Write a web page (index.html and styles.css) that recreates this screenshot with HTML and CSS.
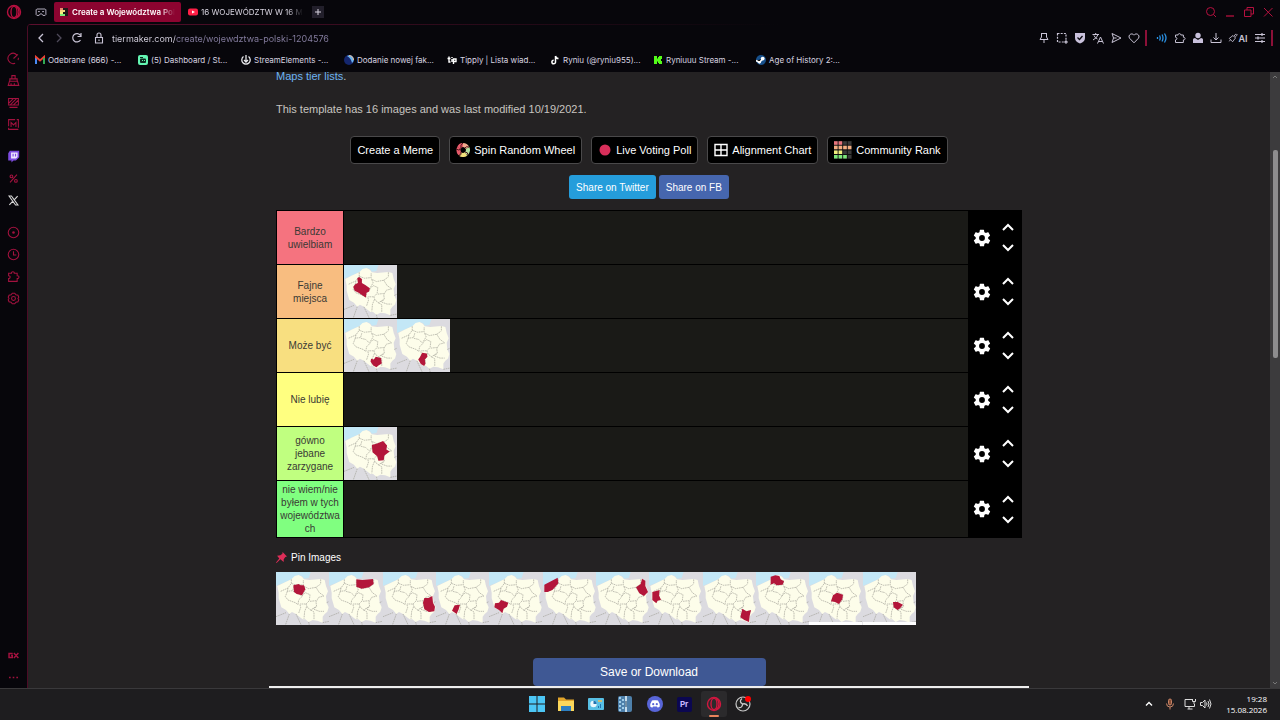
FILE: index.html
```html
<!DOCTYPE html>
<html lang="pl">
<head>
    <meta charset="UTF-8">
    <meta name="viewport" content="width=device-width, initial-scale=1.0">
    <title>Create a Województwa Polski Tier List</title>
    <link rel="stylesheet" href="styles.css">
</head>
<body>
    <!-- shared shapes -->
    <svg class="defs" aria-hidden="true">
        <symbol id="poland" viewBox="0 0 160 160">
            <rect width="160" height="160" fill="#dcdbe0"/>
            <path fill="#c3e7f6" d="M0 0H104L98 18 84 20 78 12 68 10 46 22 24 32 4 40 0 42Z"/>
            <path fill="#fdfdea" d="M4 42 24 32 46 22 56 12 68 9 78 14 84 22 100 24 134 21 146 24 150 42 156 58 150 72 152 92 158 106 154 119 146 126 140 134 140 152 124 146 110 144 98 150 88 142 80 142 70 134 60 126 48 120 40 126 30 114 16 106 12 92 8 78 8 62Z"/>
            <path class="borders" d="M46 22 46 34 36 48 14 58M46 34 62 40 82 38 82 24M36 48 34 58 50 56 54 42M34 58 28 74 36 84 58 92 66 98 68 84 78 74 66 62 50 58M82 42 98 50 120 46 134 36M84 44 88 54 78 70M120 46 130 62 144 72 128 76 120 90 122 104 112 110M78 72 88 62 102 68 100 86 90 96 72 96M102 88 120 86M90 96 94 106 104 114 120 104M72 98 74 106 68 124M92 104 86 118 84 140M104 114 114 120 114 142M114 112 130 118 144 118M134 22 134 36M0 134 30 122M40 126 28 160M60 126 76 160M98 150 100 160M140 152 160 148M152 92 160 88"/>
        </symbol>
        <symbol id="gear" viewBox="0 0 24 24">
            <path fill="#fff" d="M19.4 13a7.500 7.500 0 0 0 0-2l2.100-1.600c.2-.2.3-.5.1-.7l-2-3.500c-.1-.2-.4-.3-.6-.2l-2.500 1a7.300 7.300 0 0 0-1.700-1L14.400 2.400a.5.5 0 0 0-.5-.4h-4a.5.5 0 0 0-.5.4L9 5a7.700 7.700 0 0 0-1.700 1L4.900 5c-.2-.1-.5 0-.6.2l-2 3.500c-.1.200-.1.500.1.700L4.500 11a8 8 0 0 0 0 2l-2.100 1.600c-.2.2-.3.500-.1.700l2 3.500c.1.200.4.300.6.200l2.500-1c.5.400 1.100.7 1.700 1l.4 2.600c0 .2.2.4.5.4h4c.2 0 .5-.2.5-.4l.4-2.600c.6-.3 1.200-.6 1.700-1l2.500 1c.2.1.5 0 .6-.2l2-3.500c.1-.2.1-.5-.1-.7zM12 15.500a3.500 3.500 0 1 1 0-7 3.500 3.500 0 0 1 0 7z"/>
        </symbol>
        <symbol id="up" viewBox="0 0 14 10"><path fill="none" stroke="#fff" stroke-width="2" d="M2 8 7 3 12 8"/></symbol>
        <symbol id="down" viewBox="0 0 14 10"><path fill="none" stroke="#fff" stroke-width="2" d="M2 2 7 7 12 2"/></symbol>
        <symbol id="opera" viewBox="0 0 16 16">
            <g fill="none" stroke="currentColor" stroke-width="1.400"><circle cx="8" cy="8" r="6.500"/><ellipse cx="8" cy="8" rx="3" ry="5.600"/><path d="M10 2.500c4 2 4 9 0 11"/></g>
        </symbol>
        <symbol id="puzzle" viewBox="0 0 16 16">
            <path fill="none" stroke="currentColor" stroke-width="1.300" d="M2 4H5.500C5 1.500 9.500 1.500 9 4H12.500V7C15.500 6.500 15.500 11 12.500 10.500V14H2V10.500C4.500 10.500 4.500 7 2 7Z"/>
        </symbol>
    </svg>

    <header class="tabs">
        <button class="opera-menu" aria-label="Menu"><svg viewBox="0 0 16 16"><use href="#opera"/></svg></button>
        <button class="workspace" aria-label="Workspace"><svg viewBox="0 0 16 16"><path fill="none" stroke="currentColor" stroke-width="1.300" d="M2.500 4H13.500L14.500 5V11.500L13.500 12.500H10.500L9 10.500H7L5.500 12.500H2.500L1.500 11.500V5ZM4 7.500H6.500M9.500 7.500H12"/></svg></button>
        <button class="tab tab-active">
            <svg viewBox="0 0 8 8"><rect width="8" height="8" fill="#1d1a17"/><path fill="#f08a70" d="M0 0H3V2H0Z"/><path fill="#f7d77e" d="M0 2H5V4H0Z"/><path fill="#f4f47b" d="M0 4H3V6H0Z"/><path fill="#7eea7b" d="M0 6H5V8H0Z"/></svg>
            <span>Create a Województwa Pol</span>
        </button>
        <button class="tab">
            <svg viewBox="0 0 10 8"><rect y=".5" width="10" height="7" rx="2" fill="#ff1f46"/><path fill="#fff" d="M4 2.500 7 4 4 5.500Z"/></svg>
            <span>16 WOJEWÓDZTW W 16 M</span>
        </button>
        <button class="new-tab" aria-label="New tab"><svg viewBox="0 0 12 12"><path stroke="currentColor" d="M6 3V9M3 6H9"/></svg></button>
        <div class="window-buttons">
            <button aria-label="Search tabs"><svg viewBox="0 0 12 12"><g fill="none" stroke="currentColor"><circle cx="5.500" cy="5.500" r="4"/><path d="M8.500 8.500 11 11"/></g></svg></button>
            <button aria-label="Minimize"><svg viewBox="0 0 12 12"><path stroke="currentColor" stroke-width="1.300" d="M2 10H10"/></svg></button>
            <button aria-label="Restore"><svg viewBox="0 0 12 12"><path fill="none" stroke="currentColor" d="M1.500 4H8V10.500H1.500ZM4 4V1.500H10.500V8H8"/></svg></button>
            <button aria-label="Close"><svg viewBox="0 0 12 12"><path stroke="currentColor" d="M2 2 10.500 10.500M10.500 2 2 10.500"/></svg></button>
        </div>
    </header>

    <div class="window">
        <aside class="sidebar">
            <div class="group">
                <button aria-label="Speed dial"><svg viewBox="0 0 16 16"><g fill="none" stroke="currentColor" stroke-width="1.300"><path d="M12 3.500A6.300 6.300 0 1 0 10 13.800M14 7A6 6 0 0 1 13.500 10M8 8 13.500 3"/></g></svg></button>
                <button aria-label="Cleaner"><svg viewBox="0 0 16 16"><path fill="none" stroke="currentColor" stroke-width="1.300" d="M6 6V2H10V6M3.500 9V6H12.500V9M3 9H13L14.500 14H1.500ZM5 14V11.500M9 14V11.500"/></svg></button>
                <button aria-label="Mods"><svg viewBox="0 0 16 16"><path fill="none" stroke="currentColor" stroke-width="1.300" d="M2 3H14V11H2ZM3 14H13M2 9 8 3M4 11 12 3M8 11 14 5"/></svg></button>
                <button aria-label="Player"><svg viewBox="0 0 16 16"><path fill="none" stroke="currentColor" stroke-width="1.300" d="M2 10V2H10M12 2H14V12M14 14H2V12M5 11V5.500L8 8.500 11 5.500V11"/></svg></button>
            </div>
            <div class="group">
                <button aria-label="Twitch"><svg viewBox="0 0 16 16"><path fill="#7d4be0" d="M3.500 1H15V9L11 13H8L5.500 15.500V13H1.500V4Z"/><path fill="#eee7ff" d="M5 3H13V8.500L11 10.500H5Z"/><path stroke="#7d4be0" stroke-width="1.400" d="M7.500 4.500V8M10.500 4.500V8"/></svg></button>
                <button aria-label="Deals"><svg class="small" viewBox="0 0 16 16"><g fill="none" stroke="currentColor" stroke-width="1.600"><circle cx="5" cy="5" r="2"/><circle cx="11.500" cy="11.500" r="2"/><path d="M13 2.500 3 13.500"/></g></svg></button>
                <button aria-label="X"><svg class="small" viewBox="0 0 16 16"><path fill="none" stroke="#d8d8d8" stroke-width="1.600" d="M1.500 1.500H5L14.500 14.500H11ZM14 1.500 9 7M7 9 2 14.500"/></svg></button>
            </div>
            <div class="group">
                <button aria-label="Play"><svg viewBox="0 0 16 16"><circle cx="8" cy="8" r="6.500" fill="none" stroke="currentColor" stroke-width="1.300"/><circle cx="8" cy="8" r="1.600" fill="currentColor"/></svg></button>
                <button aria-label="History"><svg viewBox="0 0 16 16"><g fill="none" stroke="currentColor" stroke-width="1.300"><circle cx="8" cy="8" r="6.500"/><path d="M8 4V8.500H11.500"/></g></svg></button>
                <button aria-label="Extensions"><svg viewBox="0 0 16 16"><use href="#puzzle"/></svg></button>
                <button aria-label="Settings"><svg viewBox="0 0 16 16"><g fill="none" stroke="currentColor" stroke-width="1.300"><path d="M6.500 1.500H9.500L11 3.500 13.500 4 14.500 6.500 13.500 8 14.500 9.500 13.500 12 11 12.500 9.500 14.500H6.500L5 12.500 2.500 12 1.500 9.500 2.500 8 1.500 6.500 2.500 4 5 3.500Z"/><circle cx="8" cy="8" r="2.400"/></g></svg></button>
            </div>
            <div class="group group-bottom">
                <button aria-label="GX corner"><svg viewBox="0 0 16 16"><path fill="none" stroke="currentColor" stroke-width="1.800" d="M7 5.500H2.500V10.500H6.500V8H5M8.500 5 14 11M14 5 8.500 11"/></svg></button>
                <button aria-label="More"><svg viewBox="0 0 16 16"><path stroke="currentColor" stroke-width="1.600" stroke-dasharray="2 2.500" d="M2.500 8H14"/></svg></button>
            </div>
        </aside>

        <div class="browser">
            <div class="toolbar">
                <button aria-label="Back"><svg viewBox="0 0 12 12"><path fill="none" stroke="currentColor" stroke-width="1.300" d="M8 2 4 6 8 10"/></svg></button>
                <button class="dim" aria-label="Forward"><svg viewBox="0 0 12 12"><path fill="none" stroke="currentColor" stroke-width="1.300" d="M4 2 8 6 4 10"/></svg></button>
                <button aria-label="Reload"><svg viewBox="0 0 12 12"><path fill="none" stroke="currentColor" stroke-width="1.200" d="M9.500 8A4.200 4.200 0 1 1 9.500 3.500M10 1V4.500H6.500"/></svg></button>
                <button class="lock" aria-label="Site information"><svg viewBox="0 0 12 12"><path fill="none" stroke="currentColor" stroke-width="1.100" d="M2.500 5.500H9.500V11H2.500ZM4 5.500V3Q4 1 6 1T8 3V5.500M6 7.500V9"/></svg></button>
                <input class="address" type="text" aria-label="Address" value="tiermaker.com/create/wojewdztwa-polski-1204576">
                <div class="actions">
                    <button aria-label="Pin"><svg viewBox="0 0 12 12"><path fill="none" stroke="currentColor" d="M3 1.500H9M3.500 1.500V5L2 7.500H10L8.500 5V1.500M6 7.500V11"/></svg></button>
                    <button aria-label="Snapshot"><svg viewBox="0 0 12 12"><path fill="none" stroke="currentColor" stroke-width="1.200" stroke-dasharray="2 1.200" d="M1.500 1.500H10V10H1.500Z"/><path stroke="currentColor" d="M10 8V12M8 10H12"/></svg></button>
                    <button aria-label="VPN"><svg viewBox="0 0 12 12"><path fill="#c9c1dc" d="M1 1H11V6Q11 9.500 6 11.500Q1 9.500 1 6Z"/><path fill="none" stroke="#0a0910" stroke-width="1.300" d="M3.500 5.500 5.500 7.500 8.500 4"/></svg></button>
                    <button aria-label="Translate"><svg viewBox="0 0 12 12"><path fill="none" stroke="currentColor" d="M.5 2.500H7M3.700 1V2.500M6 2.500Q5 6 1 8M2 3.500Q3 6 5.500 7M5.500 11.500 8.500 5 11.500 11.500M6.500 9.500H10.500"/></svg></button>
                    <button aria-label="Flow"><svg viewBox="0 0 12 12"><path fill="none" stroke="currentColor" d="M2 1.500 11 6 2 10.500 3.500 6ZM3.500 6H6.500"/></svg></button>
                    <button aria-label="Favourite"><svg viewBox="0 0 12 12"><path fill="none" stroke="currentColor" d="M6 10.800 1.500 6.200C-.5 3 4 .2 6 3.200C8 .2 12.500 3 10.500 6.200Z"/></svg></button>
                    <span class="mark"></span>
                    <button class="blue" aria-label="Sound"><svg viewBox="0 0 12 12"><path fill="none" stroke="currentColor" stroke-width="1.300" d="M1.500 5V7M3.500 3.500Q5 6 3.500 8.500M6 2.500Q8 6 6 9.500M8.500 1.500Q11.500 6 8.500 10.500"/></svg></button>
                    <button aria-label="Extensions"><svg viewBox="0 0 16 16"><use href="#puzzle"/></svg></button>
                    <button aria-label="Profile"><svg viewBox="0 0 12 12"><circle cx="6" cy="3.500" r="2.700" fill="#c9c1dc"/><path fill="#c9c1dc" d="M1 11V7.500Q1 6 3 6L6 8 9 6Q11 6 11 7.500V11Z"/></svg></button>
                    <button aria-label="Downloads"><svg viewBox="0 0 12 12"><path fill="none" stroke="currentColor" d="M6 1V8M3.500 5.500 6 8 8.500 5.500M1 7.500V10.500H11V7.500"/></svg></button>
                    <button class="ai"><svg viewBox="0 0 12 12"><path fill="none" stroke="currentColor" d="M1.500 6.500 6 3 9 6 5.500 10.500ZM7 4 9 1.500 10.500 3 8.500 5M10 1 11.500 2.500M3 8 1.500 10"/></svg>AI</button>
                    <button aria-label="Easy setup"><svg viewBox="0 0 12 12"><path stroke="currentColor" stroke-width="1.200" d="M1 2.500H11M1 6H11M1 9.500H11M8 1V4M4 4.500V7.500M8 8V11"/></svg></button>
                    <span class="mark"></span>
                </div>
            </div>
            <nav class="bookmarks">
                <a href="#"><svg viewBox="0 0 10 10"><path fill="none" stroke="#4a8af4" stroke-width="2" d="M1 9V3"/><path fill="none" stroke="#ea4335" stroke-width="2" d="M1 3V2L5 5.500 9 2V3"/><path stroke="#34a853" stroke-width="2" d="M9 9V3"/></svg>Odebrane (666) -...</a>
                <a href="#"><svg viewBox="0 0 10 10"><rect width="10" height="10" rx="2" fill="#63f5b2"/><rect x="2" y="3.500" width="6" height="4.500" rx="1" fill="#0c2a20"/><path stroke="#0c2a20" d="M2 2.500H5"/><path stroke="#63f5b2" d="M4.500 5V6M6.500 5V6"/></svg>(5) Dashboard / St...</a>
                <a href="#"><svg viewBox="0 0 10 10"><g fill="none" stroke="#e8e8ec" stroke-width="1.300"><path d="M2.500 1.500A4.200 4.200 0 1 0 7.500 1.500M5 0V7M3 5 5 7 7 5"/></g></svg>StreamElements -...</a>
                <a href="#"><svg viewBox="0 0 10 10"><circle cx="5" cy="5" r="5" fill="#14266e"/><path fill="#6ab4ef" d="M3 1A4 4 0 0 1 8 8Q7 3 3 1Z"/><path fill="none" stroke="#f0b98c" d="M5 .5A4.500 4.500 0 0 1 9.500 5"/></svg>Dodanie nowej fak...</a>
                <a href="#"><svg viewBox="0 0 10 10"><path fill="none" stroke="#fff" stroke-width="1.400" d="M2 1.500V7H3.500M.5 3.500H3.500M5 4V7M6.500 9V4H9V6.500H6.500M5 2V3"/></svg>Tipply | Lista wiad...</a>
                <a href="#"><svg viewBox="0 0 10 10"><path fill="none" stroke="#fff" stroke-width="1.500" d="M5.500 1V7A1.800 1.800 0 1 1 3.700 5.200M5.500 1Q6 3.500 8.500 3.500"/></svg>Ryniu (@ryniu955)...</a>
                <a href="#"><svg viewBox="0 0 10 10"><path fill="#53fc18" d="M1 1H4V3.500H5V2H6V1H9V4H8V6H9V9H6V8H5V6.500H4V9H1Z"/></svg>Ryniuuu Stream -...</a>
                <a href="#"><svg viewBox="0 0 10 10"><circle cx="5" cy="5" r="5" fill="#17508c"/><path stroke="#fff" stroke-width="1.700" d="M0 5.500 3.500 7.500 6.500 4"/><circle cx="6.700" cy="3.600" r="1.900" fill="#fff"/><circle cx="3.500" cy="7.200" r="1.300" fill="#fff"/></svg>Age of History 2:...</a>
            </nav>

            <div class="viewport">
                <main class="page">
                    <p class="intro"><a href="#">Maps tier lists</a>.</p>
                    <p class="intro">This template has 16 images and was last modified 10/19/2021.</p>

                    <div class="tools">
                        <button>Create a Meme</button>
                        <button><svg viewBox="0 0 14 14"><g fill="none" stroke-width="4"><path stroke="#e75a6a" d="M3 5Q4 2 7 2"/><path stroke="#f2a98c" d="M7 2Q10 2 11.500 5"/><path stroke="#b6e3a0" d="M11.500 5Q13 8 10 11"/><path stroke="#f4e27c" d="M10 11Q7 13 4 11"/><path stroke="#e75a6a" d="M4 11Q1.500 8 3 5"/></g><path fill="none" stroke="#4a1018" d="M7 0Q4 2 5 5M13 4Q10 3 9 5M12 12Q12 9 9 9M3 13Q6 12 5 9M0 6Q3 8 5 6"/></svg>Spin Random Wheel</button>
                        <button><svg viewBox="0 0 14 14"><circle cx="7" cy="7" r="5.500" fill="#d92f5a"/></svg>Live Voting Poll</button>
                        <button><svg viewBox="0 0 14 14"><path fill="none" stroke="#fff" stroke-width="1.400" d="M1 1.500H13V12.500H1ZM7 1.500V12.500M1 7H13"/></svg>Alignment Chart</button>
                        <button><svg class="rank" viewBox="0 0 18 18"><rect width="18" height="18" fill="#101010"/><g stroke-width="3.500" stroke-dasharray="3.600 1"><path stroke="#3a3a3a" d="M0 2H18M0 6.600H18M0 11.200H18M0 15.800H18"/><path stroke="#e8737c" d="M0 2H9"/><path stroke="#f3ac80" d="M0 6.600H18"/><path stroke="#f0ef7d" d="M0 11.200H9"/><path stroke="#7de87a" d="M0 15.800H13.500"/></g></svg>Community Rank</button>
                    </div>
                    <div class="share">
                        <button class="twitter">Share on Twitter</button>
                        <button class="facebook">Share on FB</button>
                    </div>

                    <div class="tiers">
                        <div class="tier">
                            <div class="label red">Bardzo uwielbiam</div>
                            <div class="items"></div>
                            <div class="controls">
                                <button aria-label="Settings"><svg class="gear"><use href="#gear"/></svg></button>
                                <div class="arrows"><button aria-label="Up"><svg><use href="#up"/></svg></button><button aria-label="Down"><svg><use href="#down"/></svg></button></div>
                            </div>
                        </div>
                        <div class="tier">
                            <div class="label orange">Fajne miejsca</div>
                            <div class="items">
                                <svg class="map" viewBox="0 0 160 160"><use href="#poland"/><path d="M40 40 46 36 54 42 54 54 64 60 78 70 76 80 68 84 66 98 56 92 44 84 32 78 28 66 34 58 42 54Z"/></svg>
                            </div>
                            <div class="controls">
                                <button aria-label="Settings"><svg class="gear"><use href="#gear"/></svg></button>
                                <div class="arrows"><button aria-label="Up"><svg><use href="#up"/></svg></button><button aria-label="Down"><svg><use href="#down"/></svg></button></div>
                            </div>
                        </div>
                        <div class="tier">
                            <div class="label amber">Może być</div>
                            <div class="items">
                                <svg class="map" viewBox="0 0 160 160"><use href="#poland"/><path d="M82 120 90 122 96 114 112 118 114 134 104 140 98 146 88 140 80 128Z"/></svg>
                                <svg class="map" viewBox="0 0 160 160"><use href="#poland"/><path d="M76 102 90 104 92 114 84 122 86 134 82 142 72 136 64 122 70 114Z"/></svg>
                            </div>
                            <div class="controls">
                                <button aria-label="Settings"><svg class="gear"><use href="#gear"/></svg></button>
                                <div class="arrows"><button aria-label="Up"><svg><use href="#up"/></svg></button><button aria-label="Down"><svg><use href="#down"/></svg></button></div>
                            </div>
                        </div>
                        <div class="tier">
                            <div class="label yellow">Nie lubię</div>
                            <div class="items"></div>
                            <div class="controls">
                                <button aria-label="Settings"><svg class="gear"><use href="#gear"/></svg></button>
                                <div class="arrows"><button aria-label="Up"><svg><use href="#up"/></svg></button><button aria-label="Down"><svg><use href="#down"/></svg></button></div>
                            </div>
                        </div>
                        <div class="tier">
                            <div class="label lime">gówno jebane zarzygane</div>
                            <div class="items">
                                <svg class="map" viewBox="0 0 160 160"><use href="#poland"/><path d="M84 54 100 50 118 42 130 56 128 68 138 74 122 86 120 100 104 102 100 88 86 76Z"/></svg>
                            </div>
                            <div class="controls">
                                <button aria-label="Settings"><svg class="gear"><use href="#gear"/></svg></button>
                                <div class="arrows"><button aria-label="Up"><svg><use href="#up"/></svg></button><button aria-label="Down"><svg><use href="#down"/></svg></button></div>
                            </div>
                        </div>
                        <div class="tier">
                            <div class="label green">nie wiem/nie byłem w tych województwach</div>
                            <div class="items"></div>
                            <div class="controls">
                                <button aria-label="Settings"><svg class="gear"><use href="#gear"/></svg></button>
                                <div class="arrows"><button aria-label="Up"><svg><use href="#up"/></svg></button><button aria-label="Down"><svg><use href="#down"/></svg></button></div>
                            </div>
                        </div>
                    </div>

                    <button class="pin"><svg viewBox="0 0 10 10"><path fill="#dd2e58" d="M6 0 10 4 8.500 4.500 7 6.500V9L4 6.500 .5 10 0 9.500 3 6 1 3.500 4 3 5.800 1.500Z"/></svg>Pin Images</button>

                    <div class="pool">
                        <svg class="map" viewBox="0 0 160 160"><use href="#poland"/><path d="M52 40 68 36 74 40 84 40 88 52 78 70 62 66 54 60Z"/></svg>
                        <svg class="map" viewBox="0 0 160 160"><use href="#poland"/><path d="M82 22 100 24 132 21 134 36 120 46 98 50 82 44Z"/></svg>
                        <svg class="map" viewBox="0 0 160 160"><use href="#poland"/><path d="M124 78 136 78 148 72 150 92 156 104 154 118 138 120 124 112 120 92Z"/></svg>
                        <svg class="map" viewBox="0 0 160 160"><use href="#poland"/><path d="M56 100 72 98 68 112 62 126 48 116Z"/></svg>
                        <svg class="map" viewBox="0 0 160 160"><use href="#poland"/><path d="M18 94 30 92 36 84 58 92 54 104 44 110 40 124 30 114 16 106Z"/></svg>
                        <svg class="map" viewBox="0 0 160 160"><use href="#poland"/><path d="M4 38 24 28 44 17 46 34 36 46 28 54 14 60 4 60Z"/></svg>
                        <svg class="map" viewBox="0 0 160 160"><use href="#poland"/><path d="M138 20 148 26 148 42 156 60 144 72 130 64 120 46 134 36Z"/></svg>
                        <svg class="map" viewBox="0 0 160 160"><use href="#poland"/><path d="M10 60 32 54 30 70 36 84 26 86 22 94 10 84Z"/></svg>
                        <svg class="map" viewBox="0 0 160 160"><use href="#poland"/><path d="M118 110 130 118 144 114 140 132 138 150 124 144 112 136Z"/></svg>
                        <svg class="map" viewBox="0 0 160 160"><use href="#poland"/><path d="M44 14 58 10 70 12 74 22 84 28 80 38 62 40 54 34 44 38Z"/></svg>
                        <svg class="map" viewBox="0 0 160 160"><use href="#poland"/><path d="M72 70 84 62 102 68 100 82 90 96 78 90 66 88Z"/><rect y="150" width="160" height="10"/></svg>
                        <svg class="map" viewBox="0 0 160 160"><use href="#poland"/><path d="M90 90 104 90 120 98 112 108 104 114 92 106Z"/><rect y="150" width="160" height="10"/></svg>
                    </div>

                    <button class="save">Save or Download</button>
                    <div class="preview"></div>
                </main>
                <div class="scrollbar">
                    <svg viewBox="0 0 10 10"><path fill="none" stroke="#777" d="M3 6 5 4 7 6"/></svg>
                    <div class="thumb"></div>
                    <svg viewBox="0 0 10 10"><path fill="none" stroke="#777" d="M3 4 5 6 7 4"/></svg>
                </div>
            </div>
        </div>
    </div>

    <footer class="taskbar">
        <div class="apps">
            <button aria-label="Start"><svg viewBox="0 0 16 16"><path fill="#4cc6f5" d="M0 0H7.500V7.500H0ZM8.500 0H16V7.500H8.500ZM0 8.500H7.500V16H0ZM8.500 8.500H16V16H8.500Z"/></svg></button>
            <button aria-label="Explorer"><svg viewBox="0 0 16 16"><path fill="#e2a52b" d="M0 1.500H6L8 3.500H16V8H0Z"/><path fill="#fbd75b" d="M0 5H16V15H0Z"/><path fill="#2d7fc1" d="M3 10H13V15H3Z"/></svg></button>
            <button aria-label="Control panel"><svg viewBox="0 0 16 16"><rect y="2" width="16" height="12" rx="1" fill="#58bfe4"/><circle cx="5.500" cy="8" r="3.200" fill="#e8f6fc"/><path fill="#2273b0" d="M5.500 8V4.800A3.200 3.200 0 0 1 8.700 8ZM10 10H11V12H10ZM12 8H13V12H12Z"/><path stroke="#f4bd4d" stroke-width="1.500" d="M10 5H14"/></svg></button>
            <button aria-label="Archive"><svg viewBox="0 0 16 16"><rect x="1" width="14" height="16" rx="2" fill="#4e80ab"/><path stroke="#9fcce8" stroke-width="2" stroke-dasharray="2 2" d="M3 1V15M6 3V15"/><path stroke="#c5dced" stroke-width="2" d="M9 0V16"/><path stroke="#213e59" d="M9 5V11"/></svg></button>
            <button aria-label="Discord"><svg viewBox="0 0 16 16"><circle cx="8" cy="8" r="8" fill="#5865d8"/><path fill="#fff" d="M5 4.500 7 4.200H9L11 4.500Q13 7.500 12.800 10.500L10.800 11.800 10 10.600H6L5.200 11.800 3.200 10.500Q3 7.500 5 4.500Z"/><circle cx="6.200" cy="8.200" r="1.100" fill="#5865d8"/><circle cx="9.800" cy="8.200" r="1.100" fill="#5865d8"/></svg></button>
            <button class="premiere"><span>Pr</span></button>
            <button class="running" aria-label="Opera GX"><svg viewBox="0 0 16 16"><use href="#opera"/></svg></button>
            <button class="obs" aria-label="OBS"><svg viewBox="0 0 16 16"><circle cx="8" cy="8" r="7" fill="#202020" stroke="#c9c9c9" stroke-width="1.200"/><path fill="none" stroke="#c9c9c9" stroke-width="1.300" d="M7 2.500Q3.500 5.500 7.500 8Q11.500 7 12.500 10M7.500 8Q7.500 12 3.500 11.500"/><circle cx="13" cy="3" r="3" fill="#f00"/></svg></button>
        </div>
        <div class="tray">
            <button aria-label="Hidden icons"><svg viewBox="0 0 12 12"><path fill="none" stroke="#fff" stroke-width="1.400" d="M3 7.500 6 4.500 9 7.500"/></svg></button>
            <button aria-label="Microphone"><svg viewBox="0 0 12 12"><g fill="none" stroke="#c98567"><rect x="4.500" y="1" width="3" height="6" rx="1.500" fill="#8a4f36"/><path d="M2.500 5.500Q2.500 9 6 9T9.500 5.500M6 9V11.500"/></g></svg></button>
            <button class="system" aria-label="Network and volume">
                <svg viewBox="0 0 12 12"><path fill="none" stroke="#ddd" d="M8 1.500H1V8.500H10.500V6M3.500 11H8.500M5 8.500V11M8.500 1V3.500H11.500V1M10 3.500V6"/></svg>
                <svg viewBox="0 0 12 12"><path fill="none" stroke="#ddd" d="M.5 4.500H2.500L5 2V10L2.500 7.500H.5ZM6.500 4.500Q7.500 6 6.500 7.500M8 3Q10 6 8 9M9.500 1.500Q12.500 6 9.500 10.500"/></svg>
            </button>
            <div class="clock"><time>19:28</time><time>15.08.2026</time></div>
        </div>
    </footer>
</body>
</html>
```
FILE: styles.css
```css
* {
    box-sizing: border-box;
}

body {
    margin: 0;
    height: 100vh;
    display: flex;
    flex-direction: column;
    overflow: hidden;
    background-color: #07060b;
    color: #d8d4e0;
    font-family: Inter, sans-serif;
    font-size: 9px;
}

button {
    display: flex;
    align-items: center;
    justify-content: center;
    margin: 0;
    padding: 0;
    border: 0;
    background: none;
    color: inherit;
    font: inherit;
    white-space: nowrap;
}

a {
    color: inherit;
    text-decoration: none;
}

svg {
    display: block;
    flex-shrink: 0;
}

.defs {
    position: absolute;
    width: 0;
    height: 0;
}

/* tab strip */
.tabs {
    display: flex;
    align-items: center;
    height: 24px;
    flex-shrink: 0;
    padding-right: 3px;
}

.opera-menu {
    width: 28px;
    color: #b5103f;
}

.opera-menu svg {
    width: 16px;
    height: 16px;
}

.workspace {
    width: 26px;
    color: #b8b2c4;
}

.workspace svg {
    width: 12px;
    height: 12px;
}

.tab {
    width: 127px;
    height: 20px;
    padding: 0 0 0 5px;
    gap: 3px;
    border-radius: 2px;
    justify-content: flex-start;
    font-size: 8px;
}

.tab svg {
    width: 10px;
    height: 8px;
}

.tab span {
    -webkit-mask-image: linear-gradient(to right, #000 85%, transparent);
    mask-image: linear-gradient(to right, #000 85%, transparent);
}

.tab-active {
    background-color: #8c0430;
    color: #fff;
    font-weight: 600;
}

.tab + .tab {
    padding-left: 7px;
}

.new-tab {
    width: 12px;
    height: 12px;
    margin-left: 4px;
    background-color: #221f2b;
}

.new-tab svg {
    width: 12px;
}

.window-buttons {
    display: flex;
    margin-left: auto;
    color: #b5103f;
}

.window-buttons button {
    width: 19px;
}

.window-buttons svg {
    width: 12px;
    height: 12px;
}

/* sidebar */
.window {
    display: flex;
    flex: 1;
    min-height: 0;
}

.sidebar {
    display: flex;
    flex-direction: column;
    gap: 10px;
    width: 27px;
    padding-top: 23px;
    color: #a3123f;
}

.group button {
    width: 27px;
    height: 22px;
}

.group svg {
    width: 13px;
    height: 13px;
}

.group .small {
    width: 11px;
    height: 11px;
}

.group-bottom {
    margin-top: auto;
}

/* browser frame */
.browser {
    display: flex;
    flex-direction: column;
    flex: 1;
    min-width: 0;
    border-left: 1px solid #4c0c26;
    border-top-left-radius: 4px;
    background: linear-gradient(to right, #5c0f2e, transparent 60%) top / 100% 1px no-repeat;
}

.toolbar {
    display: flex;
    align-items: center;
    height: 28px;
    padding: 0 5px 0 4px;
    color: #c9c4d6;
}

.toolbar button {
    width: 18px;
    height: 18px;
}

.toolbar svg {
    width: 12px;
    height: 12px;
}

.toolbar .dim {
    color: #4f4a5a;
}

.toolbar .lock {
    width: 26px;
}

.address {
    flex: 1;
    min-width: 0;
    padding: 0;
    border: 0;
    outline: 0;
    color: transparent;
    background: linear-gradient(to right, #dcd8e6 63px, #8880a3 63px);
    -webkit-background-clip: text;
    background-clip: text;
    font: inherit;
}

.actions {
    display: flex;
    align-items: center;
}

.mark {
    width: 2px;
    height: 16px;
    margin: 0 2px;
    background-color: #8c1038;
}

.actions .mark + button {
    margin-left: 4px;
}

.actions .blue {
    color: #2b93e6;
}

.actions .ai {
    width: 26px;
    font-weight: 600;
}

.actions .ai svg {
    width: 10px;
}

.bookmarks {
    display: flex;
    height: 20px;
    padding-left: 7px;
    font-size: 8px;
}

.bookmarks a {
    display: flex;
    align-items: center;
    gap: 3px;
    width: 103px;
    padding-bottom: 4px;
    white-space: nowrap;
}

.bookmarks svg {
    width: 10px;
    height: 10px;
}

/* tier list page */
.viewport {
    display: flex;
    flex: 1;
    min-height: 0;
    overflow: hidden;
    background-color: #242223;
    font-family: "Liberation Sans", Arial, sans-serif;
    font-size: 10px;
}

.page {
    display: flex;
    flex-direction: column;
    width: 760px;
    margin: -3px auto 0;
    padding: 0 7px;
}

.intro {
    margin: 0 0 19px;
    color: #c8c5c0;
    font-size: 11px;
    line-height: 14px;
}

.intro a {
    color: #6db3f2;
}

.tools {
    display: flex;
    justify-content: center;
    gap: 9px;
    margin-top: 1px;
}

.tools button {
    height: 28px;
    padding: 0 6px;
    gap: 4px;
    border: 1px solid #4a494a;
    border-radius: 4px;
    background-color: #000;
    color: #fff;
    font-size: 11px;
}

.tools svg {
    width: 14px;
    height: 14px;
}

.tools .rank {
    width: 18px;
    height: 18px;
}

.share {
    display: flex;
    justify-content: center;
    gap: 3px;
    margin: 11px 0;
}

.share button {
    height: 24px;
    padding: 0 7px;
    border-radius: 3px;
    color: #fff;
}

.twitter {
    background-color: #259ddb;
}

.facebook {
    background-color: #4666ae;
}

.tiers {
    border: 1px solid #000;
    border-bottom: 0;
}

.tier {
    display: flex;
    min-height: 54px;
    border-bottom: 1px solid #000;
    background-color: #1a1a17;
}

.label {
    display: flex;
    align-items: center;
    justify-content: center;
    width: 67px;
    padding: 2px 3px;
    border-right: 1px solid #000;
    color: #3a3a35;
    font-size: 10px;
    line-height: 13px;
    text-align: center;
    overflow-wrap: anywhere;
}

.red { background-color: #f5737f; }
.orange { background-color: #f8bd80; }
.amber { background-color: #f8df80; }
.yellow { background-color: #ffff80; }
.lime { background-color: #c0ff80; }
.green { background-color: #80ff80; }

.items {
    display: flex;
    flex: 1;
}

.map {
    width: 53px;
    height: 53px;
}

.map > path {
    fill: #b3163a;
}

.map > rect {
    fill: #fff;
}

.borders {
    fill: none;
    stroke: #a3a298;
    stroke-width: 2;
    stroke-dasharray: 5 2;
}

.controls {
    display: flex;
    align-items: center;
    width: 53px;
    background-color: #000;
}

.controls > button {
    width: 27px;
}

.gear {
    width: 20px;
    height: 20px;
}

.arrows {
    display: flex;
    flex-direction: column;
    gap: 11px;
    width: 26px;
    align-items: center;
}

.arrows svg {
    width: 14px;
    height: 10px;
}

.pin {
    align-self: flex-start;
    gap: 4px;
    height: 14px;
    margin: 13px 0 7px;
    color: #fff;
}

.pin svg {
    width: 11px;
    height: 11px;
}

.pool {
    display: grid;
    grid-template-columns: repeat(12, 1fr);
    width: 640px;
    overflow: hidden;
    background-color: #dcdbe0;
}

.pool .map {
    width: 100%;
    height: auto;
}

.save {
    align-self: center;
    width: 233px;
    height: 28px;
    margin-top: 33px;
    flex-shrink: 0;
    border-radius: 4px;
    background-color: #3f5894;
    color: #fff;
    font-size: 12px;
}

.preview {
    margin: 0 -7px;
    border-top: 2px solid #eee;
}

.scrollbar {
    display: flex;
    flex-direction: column;
    width: 10px;
    background-color: #3c3b3d;
}

.scrollbar svg {
    height: 10px;
}

.thumb {
    width: 5px;
    height: 208px;
    margin: 68px auto auto;
    border-radius: 2px;
    background-color: #8d8c8e;
}

/* taskbar */
.taskbar {
    display: grid;
    grid-template-columns: 1fr 232px 1fr;
    align-items: center;
    height: 32px;
    flex-shrink: 0;
    padding-bottom: 1px;
    border-top: 1px solid #3a393b;
    background-color: #1e1d1f;
    color: #fff;
}

.apps {
    display: flex;
    grid-column: 2;
    justify-content: space-between;
}

.apps button {
    width: 26px;
    height: 26px;
}

.apps svg {
    width: 16px;
    height: 16px;
}

.premiere span {
    width: 15px;
    border-radius: 2px;
    background-color: #0b0750;
    color: #c9b8ff;
    font-size: 8px;
    font-weight: 700;
    line-height: 15px;
}

.apps .running {
    position: relative;
    border-radius: 3px;
    background-color: #2b2a2c;
    color: #d0173f;
}

/* underline of the open app */
.running::after {
    content: "";
    position: absolute;
    bottom: 0;
    width: 10px;
    height: 2px;
    border-radius: 1px;
    background-color: #e8845c;
}

.tray {
    display: flex;
    align-items: center;
    justify-content: flex-end;
    padding-right: 13px;
}

.tray button {
    width: 21px;
}

.tray .system {
    width: 36px;
    gap: 4px;
}

.tray svg {
    width: 12px;
    height: 12px;
}

.clock {
    display: flex;
    flex-direction: column;
    margin-left: 10px;
    font-family: "Open Sans", sans-serif;
    font-size: 8px;
    line-height: 11px;
    text-align: right;
}
```
